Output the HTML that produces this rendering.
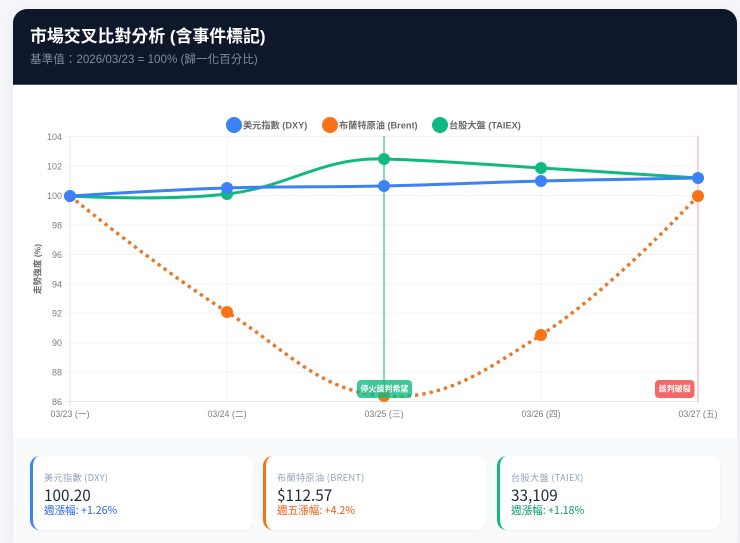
<!DOCTYPE html>
<html lang="zh-Hant"><head><meta charset="utf-8"><title>市場交叉比對分析</title>
<style>
*{box-sizing:border-box}
html,body{margin:0;padding:0;width:740px;height:543px;overflow:hidden;background:#f4f6f9}
body{position:relative;font-family:"Liberation Sans","Noto Sans CJK TC",sans-serif}
.wrap{position:absolute;left:0;top:0;width:740px;height:543px;overflow:hidden;filter:blur(.3px)}
.card{position:absolute;left:13px;top:9px;width:724px;height:534px;background:#fff;border-radius:14px 14px 0 0;overflow:hidden;box-shadow:0 4px 16px rgba(15,23,42,.06)}
.head{position:absolute;left:0;top:0;width:100%;height:76px;background:#0f172a;border-bottom:1px solid #475569}
.head h1{position:absolute;left:17px;top:16px;margin:0;font-size:16.9px;line-height:24px;font-weight:700;color:#fff;white-space:nowrap}
.head p{position:absolute;left:17px;top:42px;margin:0;font-size:11.6px;line-height:18px;color:#7f8ba0;white-space:nowrap}
svg{position:absolute;left:0;top:0}
.foot{position:absolute;left:0;top:429px;width:100%;height:105px;background:#f8fafc}
.stat{position:absolute;top:447px;width:223px;height:74px;background:#fff;border-radius:10px;border-left:3px solid;box-shadow:0 1px 3px rgba(15,23,42,.04);font-family:"Noto Sans CJK TC","Liberation Sans",sans-serif}
.stat .l{position:absolute;left:11px;top:14px;font-size:9.2px;line-height:14px;color:#94a3b8;letter-spacing:.3px;white-space:nowrap}
.stat .v{position:absolute;left:11px;top:29px;font-size:15.3px;line-height:20px;color:#1e293b;white-space:nowrap}
.stat .c{position:absolute;left:11px;top:47px;font-size:10.6px;line-height:16px;white-space:nowrap}
</style></head>
<body>
<div class="wrap">
<div class="card">
<div class="head"><h1>市場交叉比對分析 (含事件標記)</h1><p>基準值：2026/03/23 = 100% (歸一化百分比)</p></div>
<div class="foot"></div>
<div class="stat" style="left:17px;border-color:#3b82f6"><div class="l">美元指數 (DXY)</div><div class="v">100.20</div><div class="c" style="color:#2563eb">週漲幅: +1.26%</div></div>
<div class="stat" style="left:250px;border-color:#f97316"><div class="l">布蘭特原油 (BRENT)</div><div class="v">$112.57</div><div class="c" style="color:#ea580c">週五漲幅: +4.2%</div></div>
<div class="stat" style="left:484px;border-color:#10b981"><div class="l">台股大盤 (TAIEX)</div><div class="v">33,109</div><div class="c" style="color:#059669">週漲幅: +1.18%</div></div>
</div>
<svg width="740" height="543" viewBox="0 0 740 543" font-family="'Liberation Sans','Noto Sans CJK TC',sans-serif">
<g stroke="#f1f3f5" stroke-width="1">
<path d="M66 136.5H698M66 166H698M66 195.5H698M66 224.9H698M66 254.4H698M66 283.8H698M66 313.2H698M66 342.7H698M66 372.1H698"/>
<path d="M227 136V406M541 136V406"/>
</g>
<path d="M70 136V406M66 401.5H698" stroke="#e3e6ea" stroke-width="1"/>
<path d="M384 136V402" stroke="#10b981" stroke-width="1.2" opacity=".85"/>
<path d="M698 136V402" stroke="#ef4444" stroke-width="1" opacity=".5"/>
<g font-size="9" fill="#7c7c7c" text-anchor="end">
<text x="62" y="140">104</text><text x="62" y="169.5">102</text><text x="62" y="199">100</text><text x="62" y="228.5">98</text><text x="62" y="258">96</text><text x="62" y="287.5">94</text><text x="62" y="316.5">92</text><text x="62" y="346">90</text><text x="62" y="375.5">88</text><text x="62" y="405">86</text>
</g>
<g font-size="8.8" fill="#7c7c7c" text-anchor="middle">
<text x="70" y="417">03/23 (一)</text><text x="227" y="417">03/24 (二)</text><text x="384" y="417">03/25 (三)</text><text x="541" y="417">03/26 (四)</text><text x="698" y="417">03/27 (五)</text>
</g>
<text transform="translate(40.5 269) rotate(-90)" font-size="8.6" font-weight="700" fill="#6b6b6b" text-anchor="middle">走勢強度 (%)</text>
<g font-size="9.2" font-weight="700" fill="#6b6b6b">
<circle cx="234" cy="125" r="8" fill="#3b82f6"/><text x="243" y="128.5">美元指數 (DXY)</text>
<circle cx="330" cy="125" r="8" fill="#f97316"/><text x="339" y="128.5">布蘭特原油 (Brent)</text>
<circle cx="440" cy="125" r="8" fill="#10b981"/><text x="449" y="128.5">台股大盤 (TAIEX)</text>
</g>
<path d="M70 196C70 196 161.4 270.2 227 312C287 350.2 319.5 391.3 384 396C445 400.5 485.1 370.6 541 335C610.7 290.6 698 196 698 196" fill="none" stroke="#e8782a" stroke-width="3.4" stroke-dasharray="3.4 4"/>
<path d="M70 196C70 196 165 201.3 227 194C290.6 186.5 320.4 157.2 384 159C446 160.8 478.2 164.2 541 168C603.8 171.8 698 178 698 178" fill="none" stroke="#10b981" stroke-width="3"/>
<path d="M70 196C70 196 164.2 190 227 188C289.8 186 321.2 187.4 384 186C446.8 184.6 478.2 182.6 541 181C603.8 179.4 698 178 698 178" fill="none" stroke="#3b82f6" stroke-width="3"/>
<g fill="#f97316"><circle cx="70" cy="196" r="6"/><circle cx="227" cy="312" r="6"/><circle cx="384" cy="396" r="6"/><circle cx="541" cy="335" r="6"/><circle cx="698" cy="196" r="6"/></g>
<g fill="#10b981"><circle cx="227" cy="194" r="6"/><circle cx="384" cy="159" r="6"/><circle cx="541" cy="168" r="6"/></g>
<g fill="#3b82f6"><circle cx="70" cy="196" r="6"/><circle cx="227" cy="188" r="6"/><circle cx="384" cy="186" r="6"/><circle cx="541" cy="181" r="6"/><circle cx="698" cy="178" r="6"/></g>
<rect x="357" y="380" width="55" height="18" rx="4" fill="#10b981" fill-opacity=".8"/>
<text x="384.5" y="391.5" font-size="8" font-weight="700" fill="#fff" text-anchor="middle">停火談判希望</text>
<rect x="655" y="380" width="39.5" height="18" rx="4" fill="#ef4444" fill-opacity=".8"/>
<text x="674.8" y="391.5" font-size="8" font-weight="700" fill="#fff" text-anchor="middle">談判破裂</text>
</svg>
</div>
</body></html>
